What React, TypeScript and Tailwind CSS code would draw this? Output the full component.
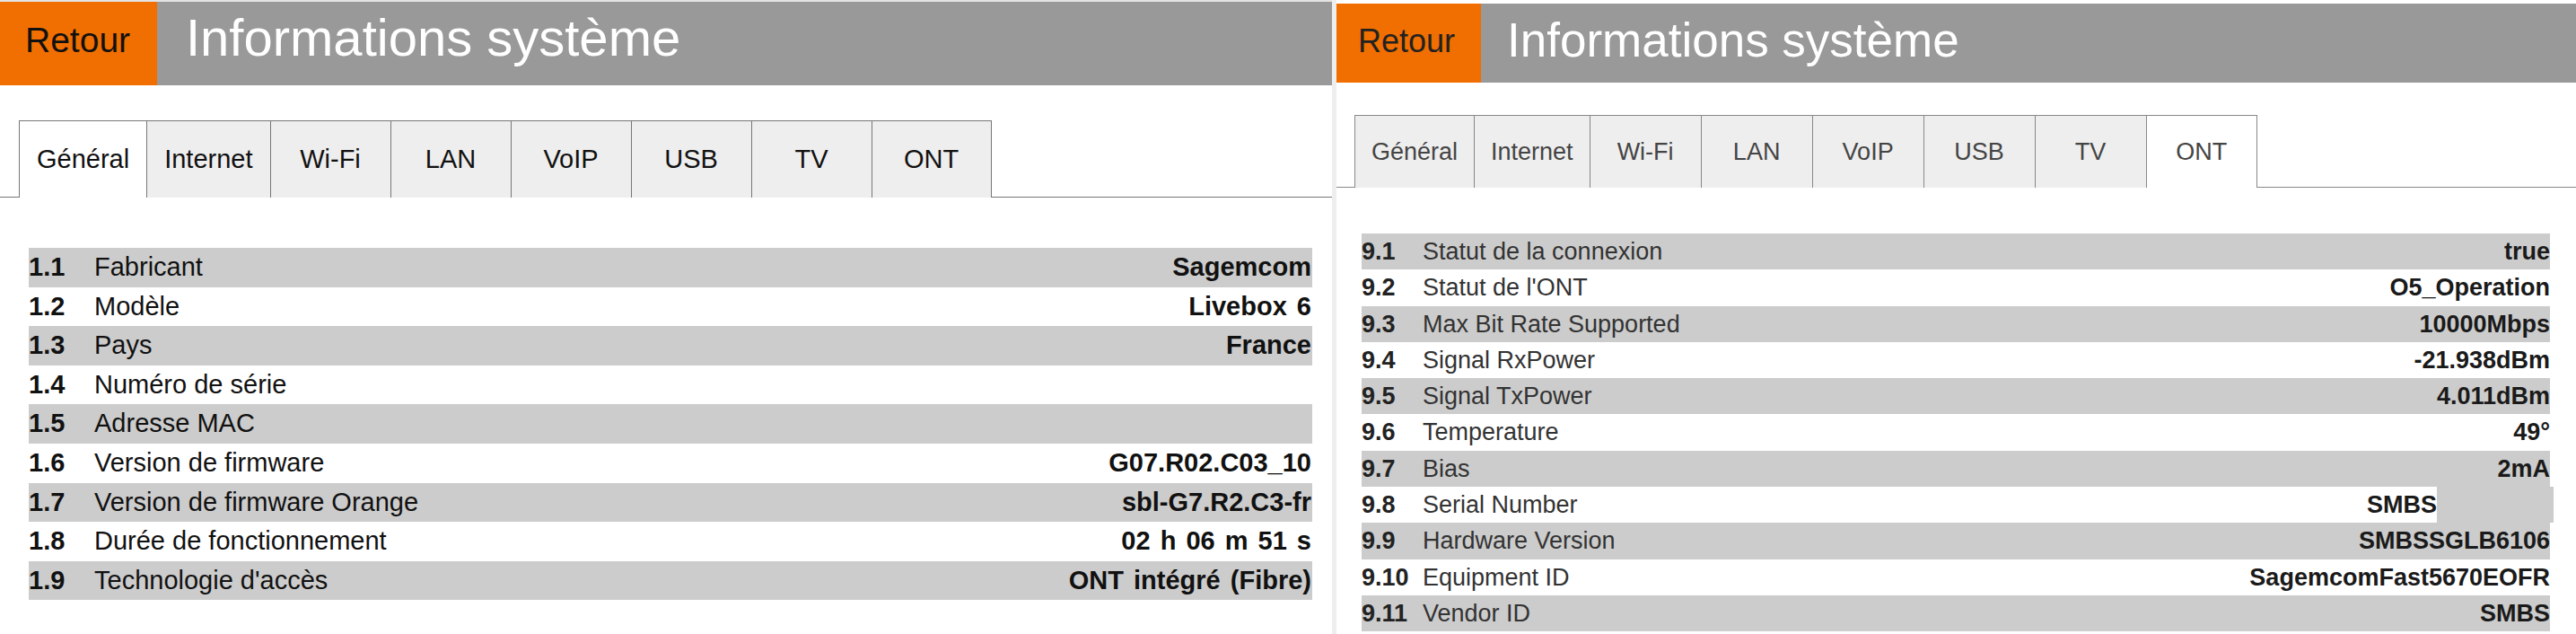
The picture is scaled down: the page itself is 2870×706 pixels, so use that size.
import React from "react";

type Row = { n: string; label: string; value: string; hidden?: boolean };

const generalRows: Row[] = [
  { n: "1.1", label: "Fabricant", value: "Sagemcom" },
  { n: "1.2", label: "Modèle", value: "Livebox 6" },
  { n: "1.3", label: "Pays", value: "France" },
  { n: "1.4", label: "Numéro de série", value: "" },
  { n: "1.5", label: "Adresse MAC", value: "" },
  { n: "1.6", label: "Version de firmware", value: "G07.R02.C03_10" },
  { n: "1.7", label: "Version de firmware Orange", value: "sbl-G7.R2.C3-fr" },
  { n: "1.8", label: "Durée de fonctionnement", value: "02 h 06 m 51 s" },
  { n: "1.9", label: "Technologie d'accès", value: "ONT intégré (Fibre)" },
];

const ontRows: Row[] = [
  { n: "9.1", label: "Statut de la connexion", value: "true" },
  { n: "9.2", label: "Statut de l'ONT", value: "O5_Operation" },
  { n: "9.3", label: "Max Bit Rate Supported", value: "10000Mbps" },
  { n: "9.4", label: "Signal RxPower", value: "-21.938dBm" },
  { n: "9.5", label: "Signal TxPower", value: "4.011dBm" },
  { n: "9.6", label: "Temperature", value: "49°" },
  { n: "9.7", label: "Bias", value: "2mA" },
  { n: "9.8", label: "Serial Number", value: "SMBS", hidden: true },
  { n: "9.9", label: "Hardware Version", value: "SMBSSGLB6106" },
  { n: "9.10", label: "Equipment ID", value: "SagemcomFast5670EOFR" },
  { n: "9.11", label: "Vendor ID", value: "SMBS" },
];

const tabs = ["Général", "Internet", "Wi-Fi", "LAN", "VoIP", "USB", "TV", "ONT"];

export default function App() {
  return (
    <div className="flex w-[2870px] h-[706px] bg-white font-['Liberation_Sans',Arial,sans-serif] overflow-hidden">
      {/* Left: Général */}
      <div className="w-[1484px] flex flex-col">
        <div className="h-[2px] bg-[#e4e4e4]" />
        <div className="flex h-[93px] bg-[#999999]">
          <div className="w-[175px] bg-[#f16e00] pl-[28px] pt-[23px] text-[39px] leading-none text-[#111]">Retour</div>
          <div className="ml-[32px] pt-[11px] text-[58px] leading-none text-white">Informations système</div>
        </div>

        <div className="mt-[39px] flex h-[86px]">
          <div className="w-[21px] border-b border-[#777]" />
          {tabs.map((t, i) => (
            <div
              key={t}
              className={`min-w-[134px] px-[19px] flex items-center justify-center border-t border-l border-[#777] text-[29px] text-[#111] ${
                i === 0 ? "bg-white" : "bg-[#eeeeee]"
              } ${i === tabs.length - 1 ? "border-r" : ""}`}
            >
              {t}
            </div>
          ))}
          <div className="flex-1 border-b border-[#777]" />
        </div>

        <div className="mt-[56px] ml-[32px] mr-[22px] flex flex-col">
          {generalRows.map((r, i) => (
            <div
              key={r.n}
              className={`h-[43.6px] flex items-center text-[29px] text-[#111] ${i % 2 === 0 ? "bg-[#cccccc]" : "bg-white"}`}
            >
              <span className="w-[73px] font-bold">{r.n}</span>
              <span className="flex-1">{r.label}</span>
              <span className="font-bold pr-[1px] [word-spacing:3px]">{r.value}</span>
            </div>
          ))}
        </div>
      </div>

      <div className="w-[5px] bg-[#eeeeee]" />

      {/* Right: ONT */}
      <div className="flex-1 flex flex-col">
        <div className="h-[4px] bg-white" />
        <div className="flex h-[88px] bg-[#999999]">
          <div className="w-[161px] bg-[#f16e00] pl-[24px] pt-[24px] text-[36px] leading-none text-[#222]">Retour</div>
          <div className="ml-[29px] pt-[14px] text-[53px] leading-none text-white">Informations système</div>
        </div>

        <div className="mt-[36px] flex h-[81px]">
          <div className="w-[20px] border-b border-[#888]" />
          {tabs.map((t, i) => (
            <div
              key={t}
              className={`min-w-[124px] px-[18px] flex items-center justify-center border-t border-l border-[#888] text-[27px] text-[#444] ${
                i === tabs.length - 1 ? "bg-white border-r" : "bg-[#eeeeee]"
              }`}
            >
              {t}
            </div>
          ))}
          <div className="flex-1 border-b border-[#888]" />
        </div>

        <div className="mt-[51px] ml-[28px] mr-[29px] flex flex-col">
          {ontRows.map((r, i) => (
            <div
              key={r.n}
              className={`h-[40.3px] flex items-center text-[27px] ${i % 2 === 0 ? "bg-[#cccccc]" : "bg-white"}`}
            >
              <span className="w-[68px] font-bold text-[#222]">{r.n}</span>
              <span className="flex-1 text-[#333]">{r.label}</span>
              <span className="font-bold text-[#1a1a1a]">{r.value}</span>
              {r.hidden && <span className="w-[130px] h-full -mr-[4px] bg-[#cccccc]" />}
            </div>
          ))}
        </div>
      </div>
    </div>
  );
}
